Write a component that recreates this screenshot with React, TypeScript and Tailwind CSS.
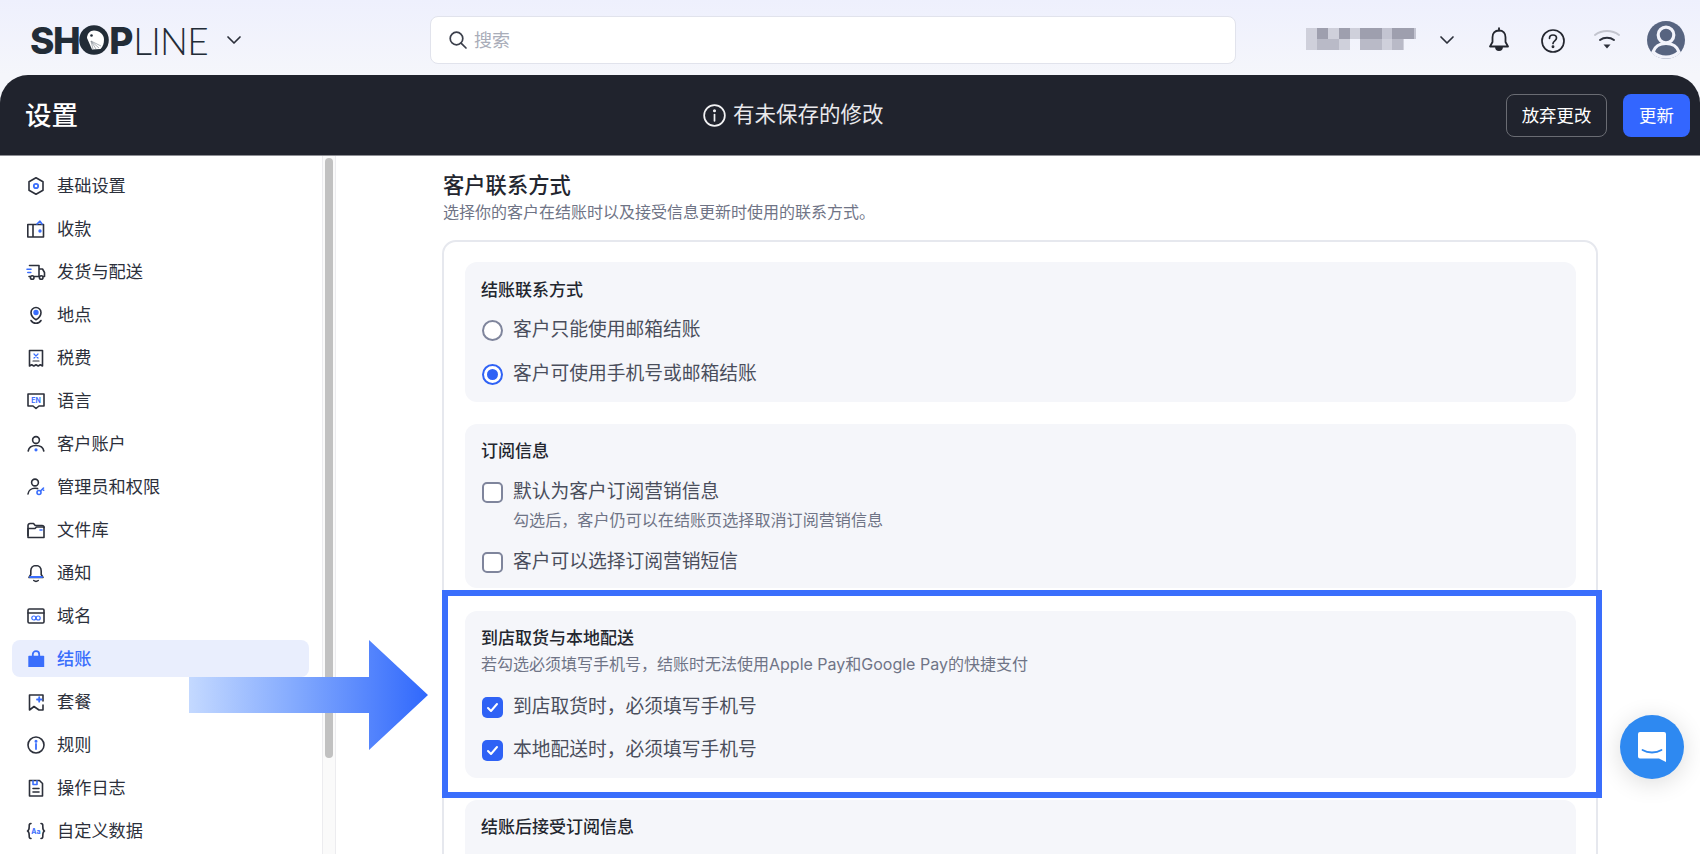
import React from "react";

const D = "#2c303b";
const B = "#3a6efc";

const S = ({ children }: { children: React.ReactNode }) => (
  <svg width="20" height="20" viewBox="0 0 20 20" fill="none" stroke={D} strokeWidth="1.6" strokeLinecap="round" strokeLinejoin="round" className="shrink-0">
    {children}
  </svg>
);

const icons: Record<string, React.ReactNode> = {
  hex: (
    <S>
      <path d="M10 1.8l7 4v8.4l-7 4-7-4V5.800z" />
      <circle cx="10" cy="10" r="2.2" stroke={B} strokeWidth="1.8" />
    </S>
  ),
  wallet: (
    <S>
      <path d="M7 5.500h10.500v12.500H1.800V5.500H7M7 5.500V18" />
      <path d="M11 5l3-2.800L16 5" stroke={B} />
      <circle cx="14" cy="12" r=".9" fill={B} stroke={B} />
    </S>
  ),
  truck: (
    <S>
      <path d="M3.500 3.500h9.500v11H8.500M13 7h3.500l2 3.500v4H17M13 14.500h.5M3 14.500h1" />
      <circle cx="6.200" cy="15.500" r="1.800" />
      <circle cx="15.200" cy="15.500" r="1.800" />
      <path d="M1 7.200h4M1.800 10.500h3" stroke={B} />
    </S>
  ),
  pin: (
    <S>
      <path d="M10 14.800c-3-1.800-5-4.200-5-7.300a5 5 0 0110 0c0 3.100-2 5.500-5 7.300z" />
      <circle cx="10" cy="7.500" r="1.900" fill={B} stroke={B} />
      <path d="M5 15.500c1 1.800 3 2.700 5 2.700s4-.9 5-2.700" />
    </S>
  ),
  receipt: (
    <S>
      <path d="M3.500 2.500h13v15.500l-2.200-1.300-2.100 1.300-2.200-1.300-2.200 1.300-2.100-1.300-2.200 1.300z" />
      <path d="M8 6l4 4M12 6l-4 4" stroke={B} strokeWidth="1.200" />
      <path d="M7 13h6" strokeWidth="1.200" />
    </S>
  ),
  lang: (
    <S>
      <path d="M2 3h16v12h-5l-3 2.500L7 15H2z" />
      <text x="10" y="11.500" textAnchor="middle" fontSize="7" fontWeight="700" fill={B} stroke="none" fontFamily="Inter, sans-serif">EN</text>
    </S>
  ),
  user: (
    <S>
      <circle cx="10" cy="6" r="3.400" />
      <path d="M2.200 17c.6-3.600 3.800-5.500 7.800-5.500s7.200 1.900 7.800 5.500" />
      <circle cx="10" cy="15.800" r=".8" fill={B} stroke={B} />
    </S>
  ),
  admin: (
    <S>
      <circle cx="9" cy="5.500" r="3.400" />
      <path d="M2 17c.4-3.600 3.400-5.800 7-5.800 1 0 1.800.1 2.600.4" />
      <circle cx="13" cy="15.500" r="2" stroke={B} />
      <path d="M14.500 14l3-3M16.500 12l1.200 1.200" stroke={B} />
    </S>
  ),
  folder: (
    <S>
      <path d="M2 15.500V5.500a2 2 0 012-2h3.500l1.700 2H16a2 2 0 012 2" />
      <path d="M2 17.500V8.500h7l1.500-1.500H18v10.500z" />
      <path d="M14 10h2" stroke={B} />
    </S>
  ),
  bell: (
    <S>
      <path d="M10 2.500c-3.200 0-5.200 2.500-5.200 5.500v3.500L3 14.500h14l-1.800-3V8c0-3-2-5.500-5.200-5.500z" />
      <path d="M4 14h12" stroke={B} strokeWidth="2" />
      <path d="M7.800 17.500c1.200 1 3.200 1 4.400 0" />
    </S>
  ),
  domain: (
    <S>
      <rect x="2" y="3" width="16" height="14" rx="1.200" />
      <path d="M2 7h16" />
      <circle cx="7.800" cy="12" r="2" stroke={B} strokeWidth="1.200" />
      <circle cx="12.200" cy="12" r="2" stroke={B} strokeWidth="1.200" />
    </S>
  ),
  bag: (
    <svg width="20" height="20" viewBox="0 0 20 20" className="shrink-0">
      <path d="M3 6.800h14.500a.7.700 0 01.700.700V18H2.300V7.500a.7.700 0 01.700-.700z" fill={B} />
      <path d="M6.800 8.500V5.300a3.200 3.200 0 016.400 0v3.200" fill="none" stroke={B} strokeWidth="1.800" />
    </svg>
  ),
  plan: (
    <S>
      <path d="M17 9V3H3.500v15l4.500-3.500 5 3.500h4v-5" />
      <path d="M11 7.500h4.500M13.200 5.200v4.500" stroke={B} strokeWidth="1.800" />
    </S>
  ),
  rule: (
    <S>
      <circle cx="10" cy="10" r="8" />
      <path d="M10 9v5" stroke={B} strokeWidth="1.800" />
      <circle cx="10" cy="6.200" r=".7" fill={B} stroke={B} />
    </S>
  ),
  log: (
    <S>
      <path d="M3.500 2.500h10l3 3v12.500h-13z" />
      <path d="M7 2.800v3.700h4V2.800" stroke={B} />
      <path d="M7 10.500h6M7 14h6" />
    </S>
  ),
  data: (
    <S>
      <path d="M5 2.500c-2 0-1.800 1.500-1.800 3S3 9.500 1.500 10c1.500.5 1.700 3 1.700 4.500s-.2 3 1.800 3M15 2.500c2 0 1.800 1.500 1.800 3s.2 4 1.700 4.500c-1.500.5-1.700 3-1.700 4.500s.2 3-1.800 3" />
      <text x="10" y="12.500" textAnchor="middle" fontSize="7" fontWeight="700" fill={B} stroke="none" fontFamily="Inter, sans-serif">Aa</text>
    </S>
  ),
};

const nav: [string, string][] = [
  ["hex", "基础设置"],
  ["wallet", "收款"],
  ["truck", "发货与配送"],
  ["pin", "地点"],
  ["receipt", "税费"],
  ["lang", "语言"],
  ["user", "客户账户"],
  ["admin", "管理员和权限"],
  ["folder", "文件库"],
  ["bell", "通知"],
  ["domain", "域名"],
  ["bag", "结账"],
  ["plan", "套餐"],
  ["rule", "规则"],
  ["log", "操作日志"],
  ["data", "自定义数据"],
];

const Chevron = () => (
  <svg width="16" height="16" viewBox="0 0 16 16" fill="none" stroke="#2c303b" strokeWidth="1.700" strokeLinecap="round" strokeLinejoin="round">
    <path d="M2 5l6 6 6-6" />
  </svg>
);

const Radio = ({ on }: { on?: boolean }) =>
  on ? (
    <span className="flex h-[21px] w-[21px] shrink-0 items-center justify-center rounded-full border-[2.5px] border-[#2f62f5] bg-white">
      <span className="h-[11px] w-[11px] rounded-full bg-[#2f62f5]" />
    </span>
  ) : (
    <span className="h-[21px] w-[21px] shrink-0 rounded-full border-[2.5px] border-[#7f859c] bg-white" />
  );

const Check = ({ on }: { on?: boolean }) =>
  on ? (
    <span className="flex h-[21px] w-[21px] shrink-0 items-center justify-center rounded-[5px] bg-[#2f62f5]">
      <svg width="13" height="13" viewBox="0 0 13 13" fill="none" stroke="#fff" strokeWidth="2" strokeLinecap="round" strokeLinejoin="round">
        <path d="M2 7l3 3 6-7" />
      </svg>
    </span>
  ) : (
    <span className="h-[21px] w-[21px] shrink-0 rounded-[5px] border-2 border-[#7f859c] bg-white" />
  );

const Row = ({ control, label, className = "" }: { control: React.ReactNode; label: string; className?: string }) => (
  <div className={`flex h-[32px] items-center gap-[10px] pl-[1px] ${className}`}>
    {control}
    <span className="text-[18.75px] leading-[32px] text-[#4a4e5c]">{label}</span>
  </div>
);

const Title = ({ children }: { children: React.ReactNode }) => (
  <div className="h-[24px] text-[17px] font-medium leading-[24px] text-[#23262f]">{children}</div>
);

export default function App() {
  return (
    <div className="relative flex h-[854px] w-[1700px] flex-col overflow-hidden bg-[#f5f6fb] font-['Inter','Noto_Sans_CJK_SC',sans-serif]">
      <header className="flex h-[75px] shrink-0 items-center bg-gradient-to-b from-[#eef0fd] to-[#f5f6fb] pt-[5px]">
        <div className="ml-[30px] flex w-[178px] items-center text-[#222c37]">
          <span className="font-['Inter'] text-[37px] font-extrabold leading-none tracking-[-1.5px]">SH</span>
          <svg width="30" height="30" viewBox="0 0 30 30" className="shrink-0">
            <circle cx="15" cy="15" r="14.800" fill="#222c37" />
            <path d="M8 13c0-4 3-7.500 7-7.500 5.500 0 10 4 10 9 0 4-1 7-3.500 9.500L13 24.500z" fill="#fff" />
            <circle cx="12.500" cy="10.500" r="1.300" fill="#222c37" />
            <path d="M12 16l2 8M12 16l5 8M12 16l8 7M12 16l10 5" stroke="#8a9099" strokeWidth=".7" />
          </svg>
          <span className="font-['Inter'] text-[37px] font-extrabold leading-none">P</span>
          <span className="font-['Lato'] text-[37px] font-light leading-none tracking-[-0.8px]">LINE</span>
        </div>
        <div className="ml-[18px]">
          <Chevron />
        </div>
        <div className="ml-[188px] flex h-[48px] w-[806px] items-center rounded-[8px] border border-[#e1e3ec] bg-white pl-[17px]">
          <svg width="20" height="20" viewBox="0 0 20 20" fill="none" stroke="#3b3f4b" strokeWidth="1.700" strokeLinecap="round">
            <circle cx="8.500" cy="8.500" r="6.300" />
            <path d="M13.300 13.300L18 18" />
          </svg>
          <span className="ml-[6px] pt-[1px] text-[18px] text-[#a9adb9]">搜索</span>
        </div>
        <svg width="116" height="24" viewBox="0 0 116 24" className="ml-[70px] shrink-0 blur-[0.6px]">
          <g fill="#cfd0db">
            <rect x="0" y="0" width="54" height="11" />
            <rect x="54" y="0" width="56" height="11" fill="#c3c4d1" />
            <rect x="0" y="11" width="44" height="11" />
            <rect x="54" y="11" width="44" height="11" />
          </g>
          <g fill="#9e9fae">
            <rect x="11" y="0" width="11" height="11" />
            <rect x="33" y="0" width="11" height="11" />
            <rect x="54" y="0" width="22" height="11" />
            <rect x="86" y="0" width="22" height="11" />
          </g>
          <g fill="#b9bac7">
            <rect x="11" y="11" width="22" height="11" />
            <rect x="54" y="11" width="22" height="11" />
            <rect x="86" y="11" width="11" height="11" />
          </g>
        </svg>
        <div className="ml-[17px]">
          <Chevron />
        </div>
        <svg width="24" height="26" viewBox="0 0 24 26" fill="none" stroke="#23262f" strokeWidth="1.800" strokeLinecap="round" strokeLinejoin="round" className="ml-[32px]">
          <path d="M12 3.500c-4.200 0-6.500 3-6.500 6.800V15L3 19.500h18L18.500 15v-4.700c0-3.800-2.300-6.800-6.500-6.800z" />
          <path d="M12 1.200v2.300" />
          <path d="M9 20c0 4 6 4 6 0" fill="#23262f" />
        </svg>
        <svg width="24" height="24" viewBox="0 0 24 24" fill="none" stroke="#23262f" strokeWidth="1.700" strokeLinecap="round" className="ml-[30px] mt-[2px]">
          <circle cx="12" cy="12" r="11" />
          <path d="M8.500 9.300c0-2 1.600-3.300 3.500-3.300s3.500 1.300 3.500 3.100c0 2.700-3.500 2.700-3.500 5.400" />
          <circle cx="12" cy="17.700" r=".6" fill="#23262f" />
        </svg>
        <svg width="26" height="22" viewBox="0 0 26 22" fill="none" strokeLinecap="round" className="ml-[29px]">
          <path d="M1 6c7-5.300 17-5.300 24 0" stroke="#c3c5cf" strokeWidth="2" />
          <path d="M6 11c4-3 10-3 14 0" stroke="#2c303b" strokeWidth="2" />
          <path d="M9.500 15.500h7L13 19.500z" fill="#2c303b" />
        </svg>
        <svg width="38" height="38" viewBox="0 0 38 38" className="ml-[27px] shrink-0">
          <circle cx="19" cy="19" r="19" fill="#576480" />
          <circle cx="19" cy="14" r="7.800" fill="none" stroke="#f2f3fb" strokeWidth="3.200" />
          <path d="M6 31c2-6 7.500-8.500 13-8.500S30 25 32 31c-3.300 3.300-8 5.200-13 5.200S9.300 34.300 6 31z" fill="none" stroke="#f2f3fb" strokeWidth="3.200" />
        </svg>
      </header>

      <div className="relative flex h-[81px] shrink-0 items-center rounded-t-[28px] border-b border-[#8d8e94] bg-[#20232d]">
        <span className="ml-[25px] text-[26.5px] font-medium leading-none text-white">设置</span>
        <div className="absolute left-[703px] top-0 flex h-full items-center gap-[7px]">
          <svg width="23" height="23" viewBox="0 0 24 24" fill="none" stroke="#f2f2f4" strokeWidth="1.800" strokeLinecap="round">
            <circle cx="12" cy="12" r="10.800" />
            <path d="M12 11v6.500" />
            <circle cx="12" cy="7" r=".7" fill="#f2f2f4" />
          </svg>
          <span className="text-[21.5px] leading-none text-[#e9e9ec]">有未保存的修改</span>
        </div>
        <div className="ml-auto mr-[10px] flex items-center gap-[16px]">
          <button className="h-[43px] w-[101px] rounded-[8px] border border-[#6a6c73] pt-[2px] text-[17.4px] text-white">放弃更改</button>
          <button className="h-[43px] w-[67px] rounded-[8px] bg-[#3366ff] pt-[2px] text-[17.4px] text-white">更新</button>
        </div>
      </div>

      <div className="flex min-h-0 flex-1 bg-white">
        <aside className="flex w-[336px] shrink-0">
          <nav className="flex w-[322px] flex-col gap-[6px] pl-[12px] pr-[13px] pt-[11px]">
            {nav.map(([k, label]) => {
              const active = k === "bag";
              return (
                <div
                  key={k}
                  className={`flex h-[37px] shrink-0 items-center gap-[11px] rounded-[8px] pl-[14px] pt-[1px] ${active ? "bg-[#e9eefd]" : ""}`}
                >
                  {icons[k]}
                  <span className={`text-[17.2px] leading-none ${active ? "font-medium text-[#3a6efc]" : "text-[#2c303b]"}`}>{label}</span>
                </div>
              );
            })}
          </nav>
          <div className="w-[14px] border-x border-[#ececef] bg-[#fafafa] px-[2px] pt-[2px]">
            <div className="h-[600px] rounded-full bg-[#c1c1c1]" />
          </div>
        </aside>
        <main className="min-w-0 flex-1 overflow-hidden pl-[107px] pt-[14px]">
          <div className="w-[1155px]">
            <h2 className="h-[30px] text-[21.3px] font-medium leading-[30px] text-[#23262f]">客户联系方式</h2>
            <p className="mt-[1px] h-[22px] text-[16px] leading-[22px] text-[#6f7486]">选择你的客户在结账时以及接受信息更新时使用的联系方式。</p>
            <div className="-ml-[1px] mt-[17px] rounded-t-[14px] border-2 border-[#e6e8ee] pb-[40px] pl-[21px] pr-[20px] pt-[20px]">
              <section className="rounded-[12px] bg-[#f5f6fa] pb-[12px] pl-[16px] pt-[16px]">
                <Title>结账联系方式</Title>
                <Row className="mt-[12px]" control={<Radio />} label="客户只能使用邮箱结账" />
                <Row className="mt-[12px]" control={<Radio on />} label="客户可使用手机号或邮箱结账" />
              </section>
              <section className="mt-[22px] rounded-[12px] bg-[#f5f6fa] pb-[10px] pl-[16px] pt-[15px]">
                <Title>订阅信息</Title>
                <Row className="mt-[13px]" control={<Check />} label="默认为客户订阅营销信息" />
                <p className="ml-[32px] mt-[1px] h-[22px] text-[16.1px] leading-[22px] text-[#6f7486]">勾选后，客户仍可以在结账页选择取消订阅营销信息</p>
                <Row className="mt-[15px]" control={<Check />} label="客户可以选择订阅营销短信" />
              </section>
              <section className="mt-[23px] rounded-[12px] bg-[#f5f6fa] pb-[12px] pl-[16px] pt-[15px]">
                <Title>到店取货与本地配送</Title>
                <p className="mt-[3px] h-[22px] text-[16px] leading-[22px] text-[#6f7486]">若勾选必须填写手机号，结账时无法使用Apple Pay和Google Pay的快捷支付</p>
                <Row className="mt-[16px]" control={<Check on />} label="到店取货时，必须填写手机号" />
                <Row className="mt-[11px]" control={<Check on />} label="本地配送时，必须填写手机号" />
              </section>
              <section className="mt-[22px] rounded-[12px] bg-[#f5f6fa] pb-[60px] pl-[16px] pt-[15px]">
                <Title>结账后接受订阅信息</Title>
              </section>
            </div>
          </div>
        </main>
      </div>

      {/* annotation frame */}
      <div className="pointer-events-none absolute left-[442px] top-[590px] h-[208px] w-[1160px] border-[6px] border-[#3a6efc]" />

      {/* annotation arrow */}
      <svg width="240" height="112" viewBox="0 0 240 112" className="pointer-events-none absolute left-[189px] top-[639px] blur-[0.5px]">
        <defs>
          <linearGradient id="arrowFill" x1="0" y1="0" x2="1" y2="0">
            <stop offset="0" stopColor="#c4d9ff" />
            <stop offset="0.45" stopColor="#82a9fe" />
            <stop offset="1" stopColor="#3068fc" />
          </linearGradient>
        </defs>
        <polygon points="0,38 180,38 180,1 239,56 180,111 180,74 0,74" fill="url(#arrowFill)" />
      </svg>

      {/* chat launcher */}
      <div className="absolute left-[1620px] top-[715px] flex h-[64px] w-[64px] items-center justify-center rounded-full bg-[#2e89f1] shadow-[0_4px_24px_rgba(0,0,0,0.14)]">
        <svg width="30" height="32" viewBox="0 0 30 32">
          <path d="M3 1h24a2 2 0 012 2v28l-7-3.500H3a2 2 0 01-2-2V3a2 2 0 012-2z" fill="#fff" />
          <path d="M5.500 19c5.500 3.300 13.500 3.300 19 0" fill="none" stroke="#2e89f1" strokeWidth="1.800" strokeLinecap="round" />
        </svg>
      </div>
    </div>
  );
}
